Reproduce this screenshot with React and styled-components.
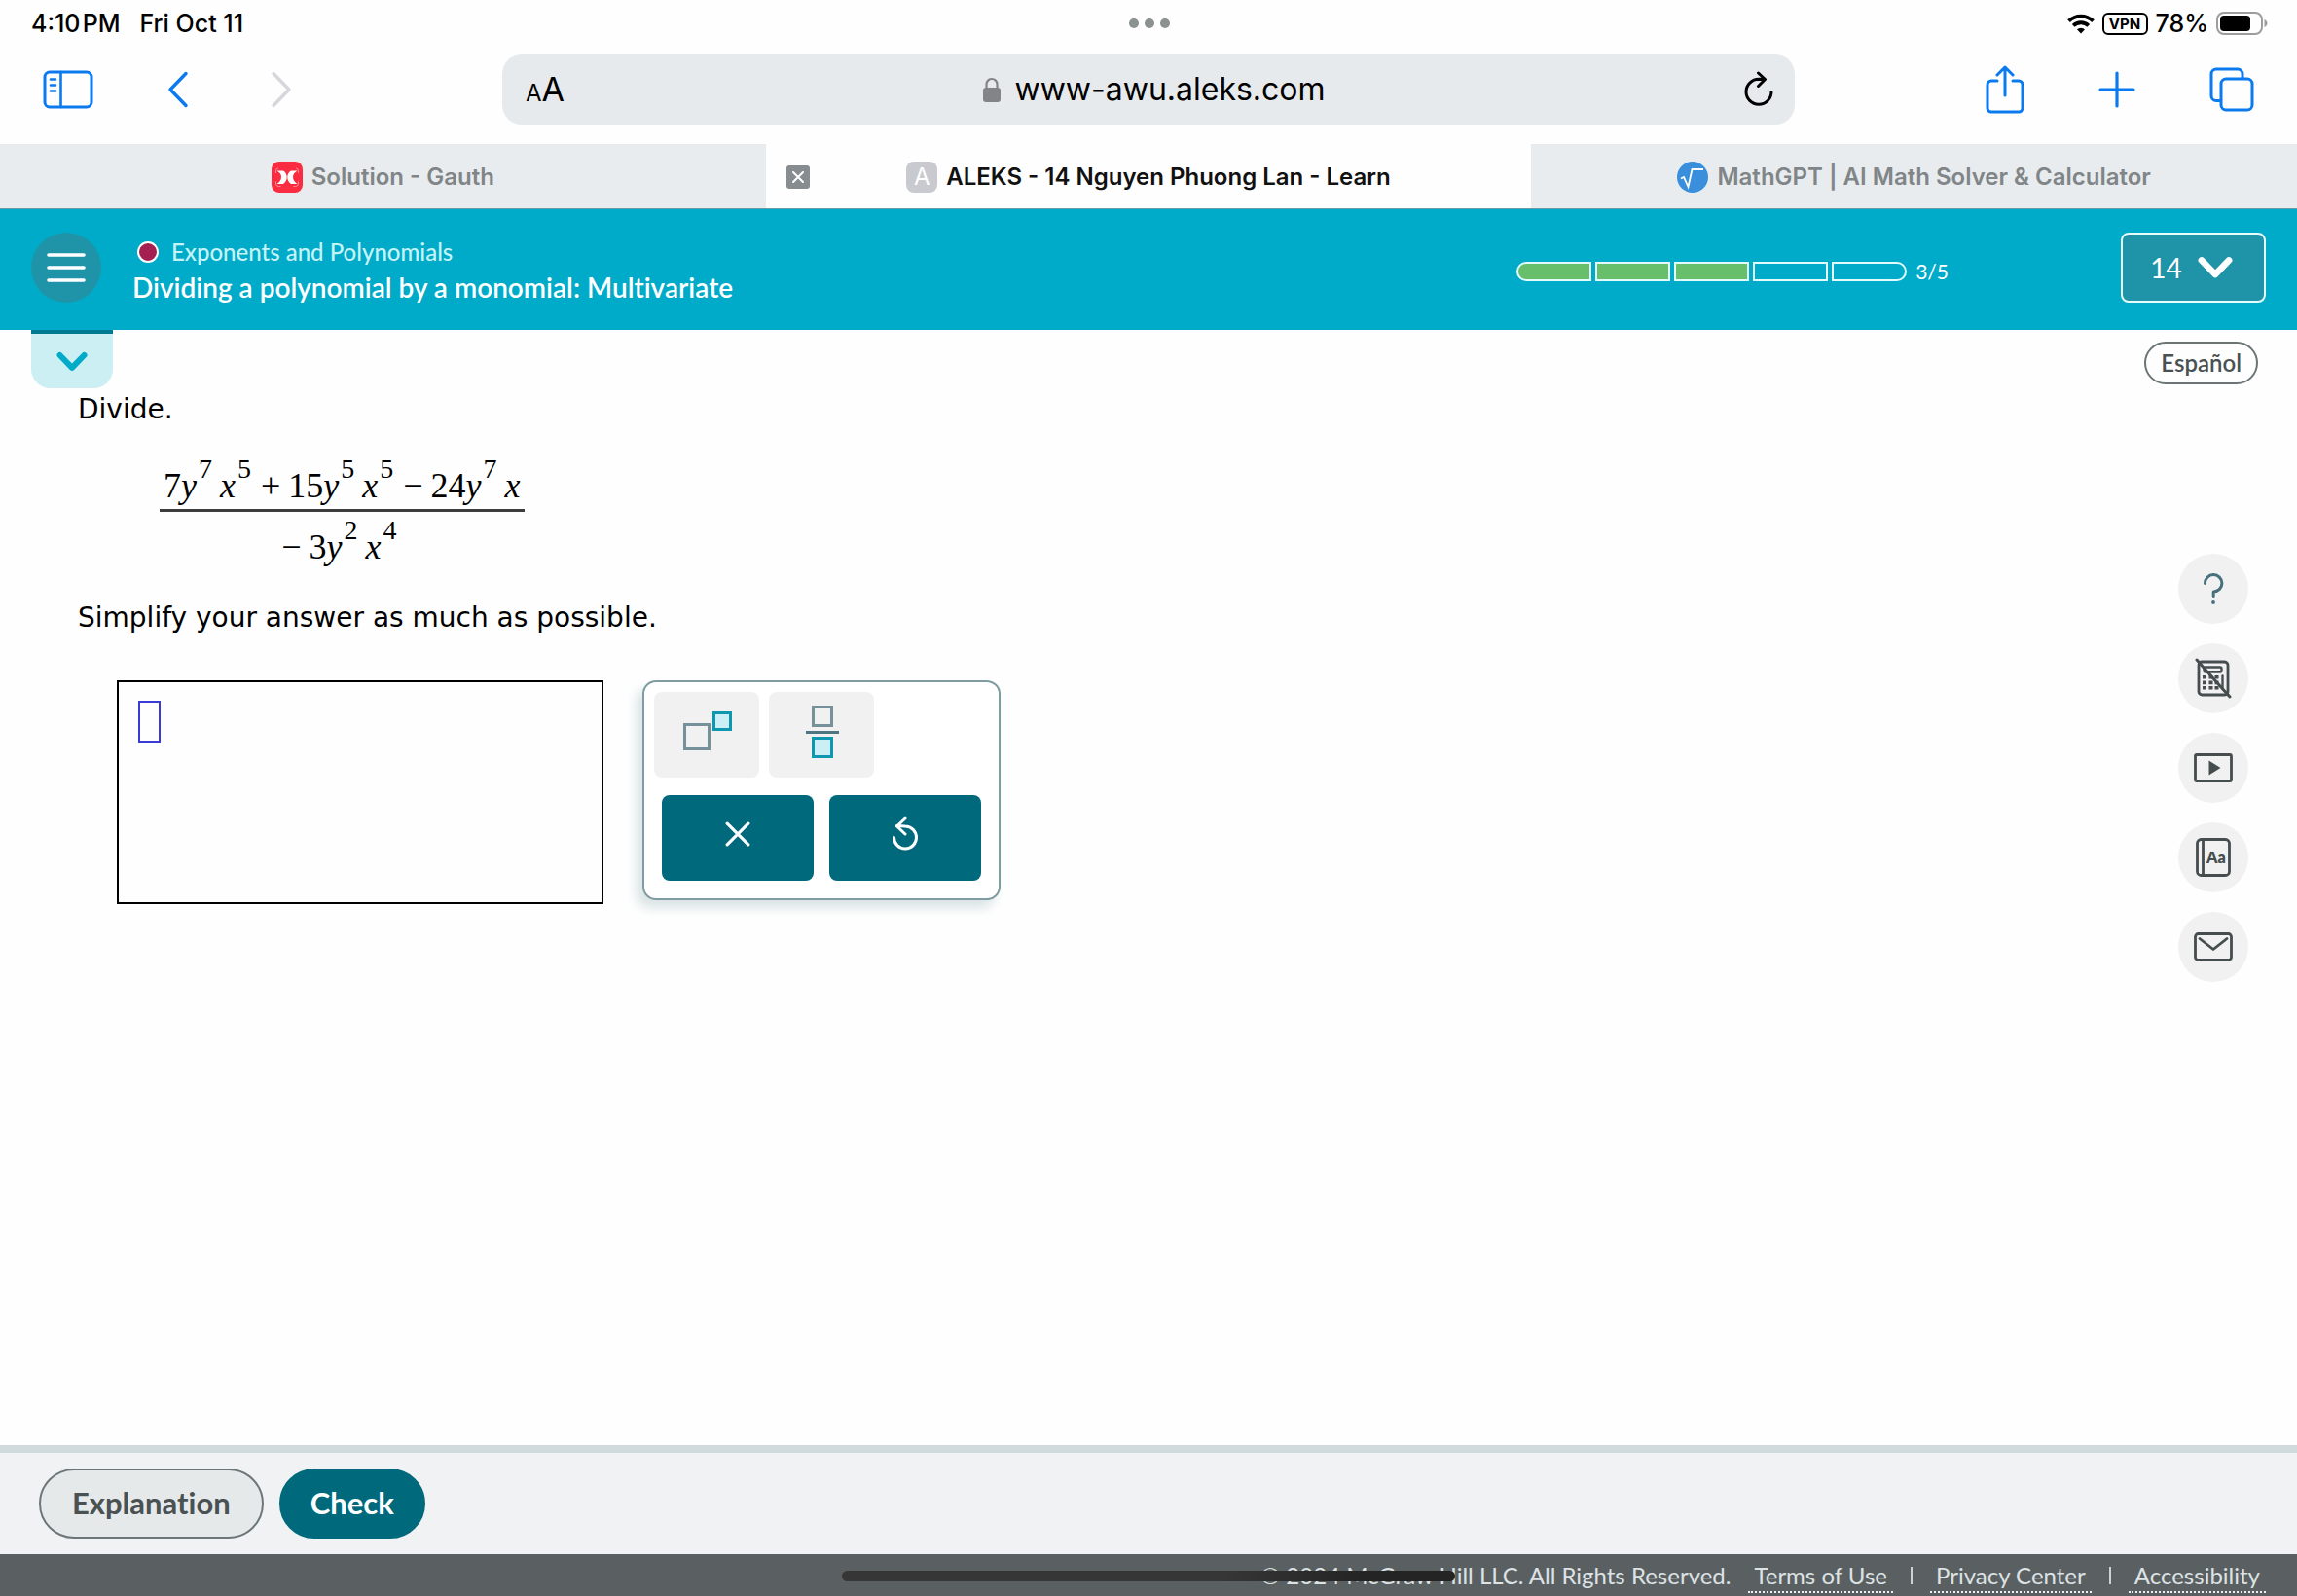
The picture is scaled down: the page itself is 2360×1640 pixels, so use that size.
import React from "react";
import styled, { createGlobalStyle } from "styled-components";

const ui = `Inter, "Liberation Sans", sans-serif`;
const brand = `Lato, "Open Sans", sans-serif`;
const prose = `"DejaVu Sans", Verdana, sans-serif`;
const serif = `"Liberation Serif", "Times New Roman", serif`;

const GlobalStyle = createGlobalStyle`
  *, *::before, *::after { box-sizing: border-box; }
  body { margin: 0; background: #fefefe; }
  button, input { font: inherit; color: inherit; margin: 0; padding: 0; border: 0; background: none; }
  button { cursor: pointer; }
  svg { display: block; flex: none; }
  p { margin: 0; }
`;

const Page = styled.div`
  position: relative;
  display: flex;
  flex-direction: column;
  min-height: 100vh;
  font-family: ${ui};
  color: #000;
`;

/* ---------- device status bar ---------- */

const StatusBar = styled.div`
  display: grid;
  grid-template-columns: 1fr auto 1fr;
  align-items: center;
  height: 48px;
  padding: 0 30px 0 32px;
  font-size: 25px;
  line-height: 28px;
  font-weight: 500;
`;

const StatusGroup = styled.div`
  display: flex;
  align-items: center;
  gap: ${(p) => p.$gap}px;
  justify-content: ${(p) => (p.$end ? "flex-end" : "flex-start")};
`;

const Dots = styled.div`
  display: flex;
  gap: 6px;
`;

const GreyDot = styled.span`
  width: 10px;
  height: 10px;
  border-radius: 50%;
  background: #8c9192;
`;

const Vpn = styled.span`
  width: 47px;
  height: 23px;
  border: 2px solid #000;
  border-radius: 6px;
  font-size: 15px;
  line-height: 19px;
  font-weight: 700;
  text-align: center;
`;

/* ---------- browser toolbar ---------- */

const Toolbar = styled.div`
  display: grid;
  grid-template-columns: 1fr minmax(0, 1328px) 1fr;
  align-items: center;
  padding: 8px 0 20px;
`;

const ToolGroup = styled.div`
  display: flex;
  align-items: center;
  gap: 76px;
  padding: 0 44px;
  justify-content: ${(p) => (p.$end ? "flex-end" : "flex-start")};
`;

const ToolButton = styled.button`
  color: ${(p) => (p.disabled ? "#d5d7da" : "#0a7aee")};
`;

const AddressBar = styled.div`
  display: flex;
  align-items: center;
  justify-content: space-between;
  height: 72px;
  padding: 0 22px 0 24px;
  border-radius: 20px;
  background: #e7eaed;
`;

const TextSize = styled.button`
  width: 40px;
  padding-top: 4px;
  font-size: 34px;
  line-height: 40px;
  text-align: left;
`;

const SmallA = styled.span`
  font-size: 24px;
`;

const Location = styled.label`
  display: flex;
  align-items: center;
  gap: 14px;
  color: #838487;
`;

const Url = styled.input`
  field-sizing: content;
  font-size: 32px;
  line-height: 40px;
  color: #000;
  outline: 0;
`;

/* ---------- browser tabs ---------- */

const TabStrip = styled.div`
  display: grid;
  grid-template-columns: repeat(3, 1fr);
  border-bottom: 1px solid #6a9ba6;
`;

const TabItem = styled.div`
  display: flex;
  align-items: center;
  height: 66px;
  padding: 2px 21px 0;
  background: ${(p) => (p.$active ? "#fefefe" : "#e8ecee")};
  color: ${(p) => (p.$active ? "#111" : "#808588")};
`;

const TabButton = styled.button`
  display: flex;
  flex: 1;
  align-items: center;
  justify-content: center;
  gap: 9px;
  padding-right: ${(p) => (p.$closable ? 24 : 0)}px;
  font-size: 24px;
  line-height: 32px;
  font-weight: 600;
  white-space: nowrap;
`;

const CloseTab = styled.button`
  display: grid;
  place-items: center;
  width: 24px;
  height: 24px;
  border-radius: 3px;
  background: #868c8f;
  color: #fff;
`;

const LetterIcon = styled.span`
  width: 32px;
  height: 32px;
  border-radius: 8px;
  background: #c9c9d0;
  color: #fff;
  font-size: 24px;
  line-height: 32px;
  font-weight: 400;
  text-align: center;
`;

/* ---------- course header ---------- */

const Header = styled.header`
  display: flex;
  align-items: center;
  height: 124px;
  padding: 0 32px 4px;
  background: #00abc9;
  color: #fff;
  font-family: ${brand};
  font-variant-ligatures: none;
`;

const MenuButton = styled.button`
  display: grid;
  place-items: center;
  width: 72px;
  height: 72px;
  margin-right: 32px;
  border-radius: 50%;
  background: #1f94a9;
`;

const Titles = styled.div`
  flex: 1;
  min-width: 0;
  padding-top: 4px;
`;

const Topic = styled.p`
  display: flex;
  align-items: center;
  gap: 13px;
  padding-left: 5px;
  font-size: 24px;
  line-height: 36px;
  font-weight: 500;
  color: #c6f3f7;
`;

const TopicDot = styled.span`
  width: 22px;
  height: 22px;
  border: 2px solid #fff;
  border-radius: 50%;
  background: #a32050;
`;

const LessonTitle = styled.h1`
  margin: 0;
  font-size: 28px;
  line-height: 36px;
  font-weight: 600;
`;

const Progress = styled.div`
  display: flex;
  align-items: center;
  gap: 9px;
  margin-right: 177px;
  padding-top: 8px;
  font-size: 21px;
  line-height: 28px;
`;

const Segments = styled.div`
  display: flex;
  gap: 4px;
`;

const Segment = styled.span`
  width: 77px;
  height: 20px;
  border: 2px solid #e2fbfd;
  background: ${(p) => (p.$done ? "#67bf6b" : "transparent")};
  &:first-child { border-radius: 10px 0 0 10px; }
  &:last-child { border-radius: 0 10px 10px 0; }
`;

const AttemptButton = styled.button`
  display: flex;
  align-items: center;
  justify-content: center;
  gap: 16px;
  width: 149px;
  height: 72px;
  padding-right: 4px;
  border: 2px solid #e8fbfd;
  border-radius: 8px;
  background: #1f94a9;
  font-size: 28px;
  line-height: 36px;
`;

/* ---------- exercise ---------- */

const Main = styled.main`
  display: flex;
  flex: 1;
  justify-content: space-between;
  background: #fefefe;
`;

const Exercise = styled.section`
  font-family: ${prose};
  font-size: 28px;
  line-height: 34px;
`;

const Handle = styled.button`
  display: grid;
  place-items: center;
  width: 84px;
  height: 60px;
  margin-left: 32px;
  padding-top: 2px;
  border-top: 4px solid #007a90;
  border-radius: 0 0 20px 20px;
  background: #cceff3;
  color: #00abc9;
`;

const Prompt = styled.p`
  padding: 5px 0 0 80px;
`;

const Fraction = styled.div`
  width: fit-content;
  margin: 39px 0 29px 164px;
  font-family: ${serif};
  font-size: 36px;
  line-height: 44px;
  text-align: center;
`;

const Numerator = styled.div`
  padding: 0 4px 2px;
  border-bottom: 3px solid #3d3d3d;
`;

const Denominator = styled.div`
  padding-top: 14px;
`;

const Power = styled.sup`
  margin: 0 8px 0 2px;
  font-size: 28px;
  line-height: 0;
  vertical-align: 20px;
`;

const Operator = styled.span`
  margin: 0 8px 0 2px;
`;

const Workspace = styled.div`
  display: flex;
  align-items: flex-start;
  gap: 40px;
  padding: 47px 0 0 120px;
`;

const AnswerArea = styled.div`
  width: 500px;
  height: 230px;
  padding: 19px 20px;
  border: 2px solid #000;
`;

const AnswerInput = styled.input`
  display: block;
  width: 23px;
  height: 43px;
  border: 2px solid #3a3ad6;
  outline: 0;
  font-family: ${serif};
`;

const Palette = styled.div`
  width: 368px;
  height: 226px;
  padding: 10px;
  border: 2px solid #7f9ca2;
  border-radius: 14px;
  background: #fff;
  box-shadow: -6px 8px 12px #dae3e5;
`;

const KeyRow = styled.div`
  display: flex;
  gap: 10px;
`;

const ActionRow = styled.div`
  display: flex;
  gap: 16px;
  padding: 18px 8px 0;
`;

const PaletteButton = styled.button`
  display: grid;
  place-items: center;
  width: ${(p) => (p.$solid ? 156 : 108)}px;
  height: 88px;
  padding: 0 0 8px ${(p) => (p.$solid ? 0 : 2)}px;
  border-radius: 8px;
  background: ${(p) => (p.$solid ? "#00697c" : "#f1f1f1")};
  color: #fff;
`;

const SideColumn = styled.aside`
  display: flex;
  flex-direction: column;
  align-items: flex-end;
  padding: 12px 40px 0 0;
`;

const LanguageButton = styled.button`
  height: 44px;
  padding: 0 15px;
  border: 2px solid #6b7576;
  border-radius: 22px;
  font-family: ${brand};
  font-size: 24px;
  line-height: 40px;
  font-weight: 600;
  color: #4a5152;
`;

const Tools = styled.div`
  display: flex;
  flex-direction: column;
  gap: 20px;
  padding: 174px 10px 0 0;
`;

const RoundTool = styled.button`
  display: grid;
  place-items: center;
  width: 72px;
  height: 72px;
  border-radius: 50%;
  background: #f1f1f1;
  color: #464d4f;
`;

/* ---------- footer ---------- */

const ActionBar = styled.div`
  display: flex;
  gap: 16px;
  padding: 16px 40px;
  border-top: 8px solid #d0d9db;
  background: #f0f2f4;
`;

const PillButton = styled.button`
  height: 72px;
  padding: 0 ${(p) => (p.$primary ? 30 : 32)}px 2px;
  border: 2px solid ${(p) => (p.$primary ? "#00697c" : "#6e7778")};
  border-radius: 36px;
  background: ${(p) => (p.$primary ? "#00697c" : "#e5e9ea")};
  color: ${(p) => (p.$primary ? "#fff" : "#4a5152")};
  font-family: ${brand};
  font-size: 31px;
  line-height: 40px;
  font-weight: 700;
  font-variant-ligatures: none;
`;

const LegalBar = styled.footer`
  display: flex;
  align-items: flex-start;
  justify-content: flex-end;
  height: 43px;
  padding: 6px 32px 0;
  background: #5a6062;
  color: #dde2e4;
  font-family: ${brand};
  font-size: 24px;
  line-height: 32px;
  white-space: nowrap;
`;

const LegalLink = styled.a`
  padding: 0 6px;
  border-bottom: 2px dotted #eef1f2;
  color: inherit;
  text-decoration: none;
`;

const Copyright = styled.span`
  margin-right: 18px;
`;

const Divider = styled.span`
  width: 2px;
  height: 18px;
  margin: 7px 18px 0;
  background: #cdd3d5;
`;

const HomeIndicator = styled.div`
  position: absolute;
  bottom: 15px;
  left: 50%;
  width: 630px;
  height: 11px;
  margin-left: -315px;
  border-radius: 6px;
  background: linear-gradient(90deg, #363636 62%, #242424 85%);
`;

/* ---------- icons ---------- */

const line = { fill: "none", stroke: "currentColor", strokeLinecap: "round", strokeLinejoin: "round" };

const Wifi = () => (
  <svg width="28" height="21" viewBox="0 0 28 21" fill="none" stroke="#000" strokeWidth="3.8">
    <path d="M1.5 7.6a18 18 0 0 1 25 0" />
    <path d="M6.2 12.4a11.2 11.2 0 0 1 15.6 0" />
    <path d="M14 20.5l-4-4.2a5.8 5.8 0 0 1 8 0z" fill="#000" stroke="none" />
  </svg>
);

const Battery = () => (
  <svg width="53" height="24" viewBox="0 0 53 24">
    <rect x="1" y="1" width="46" height="22" rx="7" fill="none" stroke="#9b9d9e" strokeWidth="2" />
    <rect x="4" y="4" width="31" height="16" rx="4" />
    <path d="M49.5 8c4 1.4 4 6.6 0 8z" fill="#9b9d9e" />
  </svg>
);

const SidebarIcon = () => (
  <svg width="52" height="40" viewBox="0 0 52 40" {...line} strokeWidth="3">
    <rect x="2" y="2" width="48" height="36" rx="5" />
    <path d="M18.5 2v36M8 9.5h5M8 15.5h5M8 21.5h5" strokeWidth="2.6" />
  </svg>
);

const BackIcon = () => (
  <svg width="30" height="38" viewBox="0 0 30 38" {...line} strokeWidth="3.4">
    <path d="M19 2.5L3 19l16 16.5" />
  </svg>
);

const ForwardIcon = () => (
  <svg width="30" height="38" viewBox="0 0 30 38" {...line} strokeWidth="3.4">
    <path d="M3 2.5L19 19 3 35.5" />
  </svg>
);

const LockIcon = () => (
  <svg width="18" height="27" viewBox="0 0 18 27">
    <path d="M3.5 12V7.5a5.5 5.5 0 0 1 11 0V12" fill="none" stroke="currentColor" strokeWidth="2.2" />
    <rect x="0" y="11" width="18" height="15" rx="3" fill="currentColor" />
  </svg>
);

const ReloadIcon = () => (
  <svg width="30" height="38" viewBox="0 0 30 38" {...line} strokeWidth="3">
    <path d="M28 21.5a13 13 0 1 1-13-13.2l6.5.2M14.5 2l7 6.5-7 7" />
  </svg>
);

const ShareIcon = () => (
  <svg width="40" height="50" viewBox="0 0 40 50" {...line} strokeWidth="3">
    <path d="M12 16H6a4 4 0 0 0-4 4v24a4 4 0 0 0 4 4h28a4 4 0 0 0 4-4V20a4 4 0 0 0-4-4h-6M20 31V2.5M12 10l8-8 8 8" />
  </svg>
);

const PlusIcon = () => (
  <svg width="38" height="38" viewBox="0 0 38 38" {...line} strokeWidth="3.2">
    <path d="M19 2v34M2 19h34" />
  </svg>
);

const PagesIcon = () => (
  <svg width="46" height="46" viewBox="0 0 46 46" {...line} strokeWidth="3">
    <path d="M11 34.5H7a5 5 0 0 1-5-5V7a5 5 0 0 1 5-5h22a5 5 0 0 1 5 5v4" />
    <rect x="12" y="12" width="32" height="32" rx="5" />
  </svg>
);

const GauthLogo = () => (
  <svg width="32" height="32" viewBox="0 0 32 32">
    <rect width="32" height="32" rx="8" fill="#fb2c42" />
    <path d="M5.5 9.5h6.5c2.600 1.600 3.700 4 3.700 6.500s-1.100 5.400-3.700 7H5.500c3-2 4.500-4.200 4.500-7s-1.500-4.700-4.500-6.500zM26.500 9.500H20c-2.600 1.600-3.700 4-3.700 6.500s1.100 5.400 3.700 7h6.500c-3-2-4.500-4.200-4.500-7s1.500-4.700 4.500-6.500z" fill="#fff" />
    <path d="M4.500 12v-2.500A3 3 0 0 1 7 6.800M27.500 12v-2.500A3 3 0 0 0 25 6.800M4.500 20.500V23a3 3 0 0 0 3 2.500h2M27.500 20.500V23a3 3 0 0 1-3 2.500h-2" fill="none" stroke="#ff8d98" />
  </svg>
);

const RootLogo = () => (
  <svg width="32" height="32" viewBox="0 0 32 32">
    <circle cx="16" cy="16" r="16" fill="#3a8fdc" />
    <path d="M4 17.5l3-1.5 4.500 10L15.500 8H27" fill="none" stroke="#fff" strokeWidth="1.8" />
  </svg>
);

const Cross = ({ size, width }) => (
  <svg width={size} height={size} viewBox="0 0 24 24" {...line} strokeWidth={width}>
    <path d="M2 2l20 20M22 2L2 22" />
  </svg>
);

const MenuIcon = () => (
  <svg width="40" height="30" viewBox="0 0 40 30" {...line} strokeWidth="3.6">
    <path d="M2 2h36M2 15h36M2 28h36" />
  </svg>
);

const ChevronDown = ({ width }) => (
  <svg width={width} viewBox="0 0 36 24" {...line} strokeWidth="6.8">
    <path d="M4 4.5L18 19 32 4.5" />
  </svg>
);

const ExponentIcon = () => (
  <svg width="50" height="40" viewBox="0 0 50 40" strokeWidth="3">
    <rect x="1.5" y="13.5" width="25" height="25" fill="none" stroke="#76919a" />
    <rect x="31.5" y="1.5" width="17" height="17" fill="#cbeff5" stroke="#0e97ae" />
  </svg>
);

const FractionIcon = () => (
  <svg width="34" height="60" viewBox="0 0 34 60" strokeWidth="3">
    <rect x="7.5" y="5.5" width="19" height="19" fill="none" stroke="#76919a" />
    <path d="M0 31.5h34" stroke="#4f7580" />
    <rect x="7.5" y="37.5" width="19" height="19" fill="#cbeff5" stroke="#0e97ae" />
  </svg>
);

const UndoIcon = () => (
  <svg width="28" height="36" viewBox="0 0 28 36" {...line} strokeWidth="3">
    <path d="M2.5 21.5a11.5 11.5 0 1 0 11.5-11.5l-8.5-.5M14 2L5.5 10l8.5 8" />
  </svg>
);

const QuestionIcon = () => (
  <svg width="24" height="34" viewBox="0 0 24 34" {...line} strokeWidth="3">
    <path d="M3.5 11.5a8.700 8.700 0 1 1 8.700 8.500v4.500" stroke="#45707c" />
    <circle cx="12" cy="31" r="1.9" fill="#45707c" stroke="none" />
  </svg>
);

const NoCalculatorIcon = () => (
  <svg width="38" height="42" viewBox="0 0 38 42" {...line}>
    <rect x="4" y="4" width="30" height="34" rx="3.5" strokeWidth="2.8" />
    <rect x="9.5" y="9.5" width="18" height="5" rx="1.5" strokeWidth="2.4" />
    <path d="M28.5 18.5v13" strokeWidth="2.4" />
    <path d="M8 18h4v3.6H8zM14.5 18h4v3.6h-4zM20.5 18h4v3.6h-4zM8 23.6h4v3.6H8zM14.5 23.6h4v3.6h-4zM20.5 23.6h4v3.6h-4zM8 29h4v3.6H8zM14.5 29h4v3.6h-4zM20.5 29h4v3.6h-4z" fill="currentColor" stroke="none" />
    <path d="M2 2l34 38" strokeWidth="3" />
  </svg>
);

const VideoIcon = () => (
  <svg width="40" height="30" viewBox="0 0 40 30" {...line} strokeWidth="2.8">
    <rect x="1.5" y="1.5" width="37" height="27" rx="1.5" />
    <path d="M15.5 7.5v15L27.5 15z" fill="currentColor" stroke="none" />
  </svg>
);

const DictionaryIcon = () => (
  <svg width="36" height="40" viewBox="0 0 36 40" {...line} strokeWidth="2.8">
    <rect x="1.5" y="1.5" width="33" height="37" rx="4" />
    <path d="M7.5 2v36" />
    <text x="11" y="26" fontFamily="Lato, sans-serif" fontSize="16" fontWeight="800" fill="currentColor" stroke="none">Aa</text>
  </svg>
);

const MailIcon = () => (
  <svg width="40" height="30" viewBox="0 0 40 30" {...line} strokeWidth="2.8">
    <rect x="1.5" y="1.5" width="37" height="27" rx="3" />
    <path d="M6 6.5l14 11 14-11" />
  </svg>
);

const tools = [
  ["Help", QuestionIcon],
  ["Calculator not available", NoCalculatorIcon],
  ["Video", VideoIcon],
  ["Dictionary", DictionaryIcon],
  ["Message", MailIcon],
];

export default function App() {
  return (
    <Page>
      <GlobalStyle />
      <StatusBar>
        <StatusGroup $gap={20}>
          <span>4:10&#8202;PM</span>
          <span>Fri Oct 11</span>
        </StatusGroup>
        <Dots>
          <GreyDot />
          <GreyDot />
          <GreyDot />
        </Dots>
        <StatusGroup $gap={8} $end>
          <Wifi />
          <Vpn>VPN</Vpn>
          <span>78%</span>
          <Battery />
        </StatusGroup>
      </StatusBar>

      <Toolbar>
        <ToolGroup>
          <ToolButton aria-label="Show sidebar"><SidebarIcon /></ToolButton>
          <ToolButton aria-label="Back"><BackIcon /></ToolButton>
          <ToolButton aria-label="Forward" disabled><ForwardIcon /></ToolButton>
        </ToolGroup>
        <AddressBar>
          <TextSize aria-label="Text size"><SmallA>A</SmallA>A</TextSize>
          <Location>
            <LockIcon />
            <Url aria-label="Address" defaultValue="www-awu.aleks.com" />
          </Location>
          <button aria-label="Reload"><ReloadIcon /></button>
        </AddressBar>
        <ToolGroup $end>
          <ToolButton aria-label="Share"><ShareIcon /></ToolButton>
          <ToolButton aria-label="New tab"><PlusIcon /></ToolButton>
          <ToolButton aria-label="All tabs"><PagesIcon /></ToolButton>
        </ToolGroup>
      </Toolbar>

      <TabStrip>
        <TabItem>
          <TabButton><GauthLogo />Solution - Gauth</TabButton>
        </TabItem>
        <TabItem $active>
          <CloseTab aria-label="Close tab">
            <Cross size={12} width={4} />
          </CloseTab>
          <TabButton $closable><LetterIcon>A</LetterIcon>ALEKS - 14 Nguyen Phuong Lan - Learn</TabButton>
        </TabItem>
        <TabItem>
          <TabButton><RootLogo />MathGPT | AI Math Solver &amp; Calculator</TabButton>
        </TabItem>
      </TabStrip>

      <Header>
        <MenuButton aria-label="Menu"><MenuIcon /></MenuButton>
        <Titles>
          <Topic><TopicDot />Exponents and Polynomials</Topic>
          <LessonTitle>Dividing a polynomial by a monomial: Multivariate</LessonTitle>
        </Titles>
        <Progress>
          <Segments>
            {[1, 2, 3, 4, 5].map((n) => <Segment key={n} $done={n <= 3} />)}
          </Segments>
          <span>3/5</span>
        </Progress>
        <AttemptButton>14<ChevronDown width="36" /></AttemptButton>
      </Header>

      <Main>
        <Exercise>
          <Handle aria-label="Expand"><ChevronDown width="32" /></Handle>
          <Prompt>Divide.</Prompt>
          <Fraction>
            <Numerator>
              7<i>y</i><Power>7</Power><i>x</i><Power>5</Power>
              <Operator>+</Operator>
              15<i>y</i><Power>5</Power><i>x</i><Power>5</Power>
              <Operator>−</Operator>
              24<i>y</i><Power>7</Power><i>x</i>
            </Numerator>
            <Denominator>
              <Operator>−</Operator>3<i>y</i><Power>2</Power><i>x</i><Power>4</Power>
            </Denominator>
          </Fraction>
          <Prompt>Simplify your answer as much as possible.</Prompt>
          <Workspace>
            <AnswerArea>
              <AnswerInput aria-label="Answer" />
            </AnswerArea>
            <Palette>
              <KeyRow>
                <PaletteButton aria-label="Exponent"><ExponentIcon /></PaletteButton>
                <PaletteButton aria-label="Fraction"><FractionIcon /></PaletteButton>
              </KeyRow>
              <ActionRow>
                <PaletteButton $solid aria-label="Clear"><Cross size={26} width={3} /></PaletteButton>
                <PaletteButton $solid aria-label="Undo"><UndoIcon /></PaletteButton>
              </ActionRow>
            </Palette>
          </Workspace>
        </Exercise>
        <SideColumn>
          <LanguageButton>Español</LanguageButton>
          <Tools>
            {tools.map(([label, Icon]) => (
              <RoundTool key={label} aria-label={label}><Icon /></RoundTool>
            ))}
          </Tools>
        </SideColumn>
      </Main>

      <ActionBar>
        <PillButton>Explanation</PillButton>
        <PillButton $primary>Check</PillButton>
      </ActionBar>
      <LegalBar>
        <Copyright>© 2024 McGraw Hill LLC. All Rights Reserved.</Copyright>
        <LegalLink href="#terms">Terms of Use</LegalLink>
        <Divider />
        <LegalLink href="#privacy">Privacy Center</LegalLink>
        <Divider />
        <LegalLink href="#accessibility">Accessibility</LegalLink>
      </LegalBar>
      <HomeIndicator />
    </Page>
  );
}
